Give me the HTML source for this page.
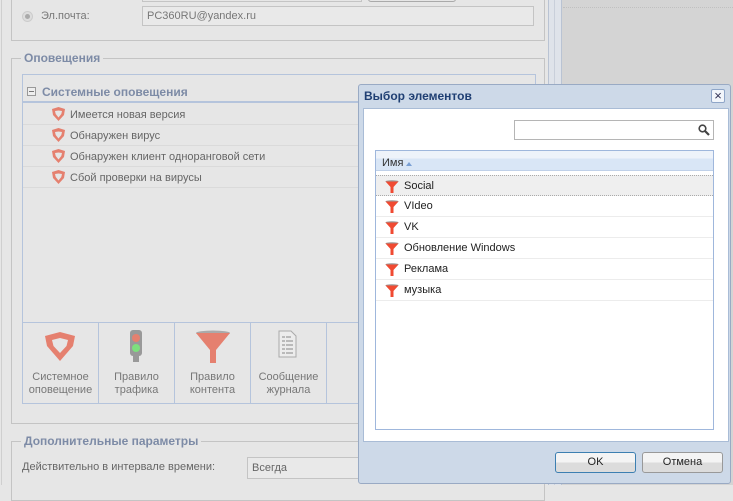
<!DOCTYPE html>
<html><head><meta charset="utf-8"><style>
*{margin:0;padding:0;box-sizing:border-box}
body{width:733px;height:485px;overflow:hidden;background:#e6e6e6;font-family:"Liberation Sans","DejaVu Sans",sans-serif;font-size:11px;color:#666;position:relative}
.a{position:absolute}
.fs{position:absolute;border:1px solid #c4c4c4}
.lg{position:absolute;background:#e6e6e6;color:#7d8ba6;font-weight:bold;font-size:12px;padding:0 3px}
.row{position:absolute;left:23px;width:512px;height:21px;border-bottom:1px solid #dadada;line-height:22px;color:#666}
.row span{position:absolute;left:47px}
.tb{position:absolute;top:322px;height:81px;width:76px;border-right:1px solid #b5c4dc;text-align:center;font-size:11px;line-height:13px;color:#777}
.tb div.t{position:absolute;top:49px;width:100%}
.dr{position:absolute;left:376px;width:337px;height:21px;border-bottom:1px solid #ececec;line-height:20px;color:#222}
.dr span{position:absolute;left:28px}
.btn{position:absolute;top:452px;width:81px;height:21px;border:1px solid #999;border-radius:3px;background:linear-gradient(#f4f4f4 50%,#dcdcdc 50%);text-align:center;line-height:19px;color:#222;font-size:11px}
</style></head><body>
<div class="a" style="left:1px;top:0;width:1px;height:485px;background:#cfcfcf"></div>
<div class="a" style="left:548px;top:0;width:14px;height:485px;background:#dfe3ea;border-left:1px solid #b9c3d3;border-right:1px solid #b9c3d3"></div>
<div class="a" style="left:554px;top:0;width:1px;height:485px;background:#c9cfda"></div>
<div class="a" style="left:562px;top:0;width:171px;height:485px;background:#d4d4d4"></div>
<div class="a" style="left:563px;top:7px;width:170px;border-top:1px dotted #c0c0c0"></div>
<div class="fs" style="left:11px;top:-5px;width:534px;height:46px"></div>
<div class="a" style="left:142px;top:-4px;width:220px;height:6px;border:1px solid #c4c4c4;border-top:none"></div>
<div class="a" style="left:368px;top:-4px;width:88px;height:6px;border:1px solid #aaa;border-top:none;border-radius:0 0 3px 3px"></div>
<div class="a" style="left:22px;top:11px;width:11px;height:11px;border-radius:50%;background:#ddd;border:1px solid #ccc"></div>
<div class="a" style="left:25px;top:14px;width:5px;height:5px;border-radius:50%;background:#aaa"></div>
<div class="a" style="left:41px;top:10px;color:#777">Эл.почта:</div>
<div class="a" style="left:142px;top:6px;width:392px;height:20px;border:1px solid #c4c4c4;background:#e9e9e9;line-height:18px;padding-left:4px;color:#777">PC360RU@yandex.ru</div>
<div class="fs" style="left:11px;top:58px;width:534px;height:366px"></div>
<div class="lg" style="left:21px;top:51px">Оповещения</div>
<div class="a" style="left:22px;top:74px;width:514px;height:330px;border:1px solid #b5c4dc"></div>
<div class="a" style="left:23px;top:82px;width:512px;height:21px;border-bottom:2px solid #b5c4dc"></div>
<div class="a" style="left:27px;top:87px;width:9px;height:9px;border:1px solid #999;background:#eee"></div>
<div class="a" style="left:29px;top:91px;width:5px;height:1px;background:#777"></div>
<div class="a" style="left:42px;top:85px;color:#7d8ba6;font-weight:bold;font-size:12px">Системные оповещения</div>
<div class="row" style="top:104px"><svg class="a" style="left:28px;top:3px" width="15" height="15" viewBox="0 0 15 15"><path d="M1 2 L7.5 0 L14 2 L13 8 L7.5 14 L2 8Z" fill="#e5806f"/><path d="M4 4 L7.5 3.5 L11 4 L10.3 7 L7.5 10.5 L4.7 7Z" fill="#e6e6e6"/></svg><span>Имеется новая версия</span></div>
<div class="row" style="top:125px"><svg class="a" style="left:28px;top:3px" width="15" height="15" viewBox="0 0 15 15"><path d="M1 2 L7.5 0 L14 2 L13 8 L7.5 14 L2 8Z" fill="#e5806f"/><path d="M4 4 L7.5 3.5 L11 4 L10.3 7 L7.5 10.5 L4.7 7Z" fill="#e6e6e6"/></svg><span>Обнаружен вирус</span></div>
<div class="row" style="top:146px"><svg class="a" style="left:28px;top:3px" width="15" height="15" viewBox="0 0 15 15"><path d="M1 2 L7.5 0 L14 2 L13 8 L7.5 14 L2 8Z" fill="#e5806f"/><path d="M4 4 L7.5 3.5 L11 4 L10.3 7 L7.5 10.5 L4.7 7Z" fill="#e6e6e6"/></svg><span>Обнаружен клиент одноранговой сети</span></div>
<div class="row" style="top:167px"><svg class="a" style="left:28px;top:3px" width="15" height="15" viewBox="0 0 15 15"><path d="M1 2 L7.5 0 L14 2 L13 8 L7.5 14 L2 8Z" fill="#e5806f"/><path d="M4 4 L7.5 3.5 L11 4 L10.3 7 L7.5 10.5 L4.7 7Z" fill="#e6e6e6"/></svg><span>Сбой проверки на вирусы</span></div>
<div class="a" style="left:23px;top:322px;width:512px;height:1px;background:#b5c4dc"></div>
<div class="tb" style="left:23px"><svg class="a" style="left:21px;top:10px" width="32" height="30" viewBox="0 0 32 30"><path d="M1 4 L16 0 L31 4 L29 14 L16 29 L3 14Z" fill="#e5806f"/><path d="M8 8 L16 6 L24 8 L22.5 14 L16 21 L9.5 14Z" fill="#e6e6e6"/></svg><div class="t">Системное<br>оповещение</div></div>
<div class="tb" style="left:99px"><div class="a" style="left:31px;top:8px;width:12px;height:26px;background:#999;border-radius:3px"></div><div class="a" style="left:34px;top:33px;width:6px;height:7px;background:#999"></div><div class="a" style="left:33px;top:12px;width:8px;height:8px;border-radius:50%;background:#e5806f"></div><div class="a" style="left:33px;top:22px;width:8px;height:8px;border-radius:50%;background:#7de07d"></div><div class="t">Правило<br>трафика</div></div>
<div class="tb" style="left:175px"><svg class="a" style="left:20px;top:8px" width="36" height="34" viewBox="0 0 36 34"><ellipse cx="18" cy="3" rx="17" ry="2.5" fill="#aaa"/><path d="M1 3 L35 3 L21 20 L21 33 L15 33 L15 20Z" fill="#e5806f"/></svg><div class="t">Правило<br>контента</div></div>
<div class="tb" style="left:251px"><svg class="a" style="left:27px;top:8px" width="20" height="28" viewBox="0 0 20 28"><path d="M1 1 L13 1 L18 6 L18 27 L1 27Z" fill="#ececec" stroke="#aaa"/><g stroke="#aaa" stroke-width="1.5"><path d="M4 7h3M8 7h5M4 11h3M8 11h7M4 15h3M8 15h7M4 19h3M8 19h7M4 23h3M8 23h7"/></g></svg><div class="t">Сообщение<br>журнала</div></div>
<div class="fs" style="left:11px;top:441px;width:534px;height:60px"></div>
<div class="lg" style="left:21px;top:434px">Дополнительные параметры</div>
<div class="a" style="left:22px;top:461px;color:#666">Действительно в интервале времени:</div>
<div class="a" style="left:247px;top:457px;width:120px;height:22px;border:1px solid #c4c4c4;background:#e9e9e9;line-height:21px;padding-left:4px;color:#666">Всегда</div>
<div class="a" style="left:358px;top:84px;width:373px;height:400px;background:#cdd9e8;border:1px solid #99aac4;border-radius:3px"></div>
<div class="a" style="left:364px;top:89px;color:#1f3f73;font-weight:bold;font-size:12px">Выбор элементов</div>
<div class="a" style="left:711px;top:89px;width:14px;height:14px;border:1px solid #8fa6c8;background:#f2f6fb;border-radius:2px;color:#335;font-size:13px;line-height:11px;text-align:center">×</div>
<div class="a" style="left:363px;top:108px;width:366px;height:334px;background:#fff;border:1px solid #a9bcd6"></div>
<div class="a" style="left:514px;top:120px;width:200px;height:20px;border:1px solid #b5b5b5;background:#fff"></div>
<svg class="a" style="left:698px;top:124px" width="12" height="12" viewBox="0 0 12 12"><circle cx="4.5" cy="4.5" r="3.3" fill="none" stroke="#444" stroke-width="1.6"/><path d="M7 7 L11 11" stroke="#444" stroke-width="2.2"/></svg>
<div class="a" style="left:375px;top:150px;width:339px;height:280px;border:1px solid #9fb7dc"></div>
<div class="a" style="left:376px;top:151px;width:337px;height:20px;background:linear-gradient(#eef3fa 40%,#d9e6f6 40%);border-bottom:1px solid #bfd0e8"></div>
<div class="a" style="left:382px;top:157px;color:#333">Имя</div>
<div class="a" style="left:406px;top:162px;width:0;height:0;border-left:3px solid transparent;border-right:3px solid transparent;border-bottom:4px solid #7aa0d4"></div>
<div class="dr" style="top:175px;background:#efefef;border-top:1px dotted #aaa;border-bottom:1px dotted #aaa"><svg class="a" style="left:9px;top:4px" width="14" height="14" viewBox="0 0 14 14"><ellipse cx="7" cy="1.5" rx="6.5" ry="1.2" fill="#999"/><path d="M0.5 1.5 L13.5 1.5 L8.5 7 L8.5 13 L5.5 13 L5.5 7Z" fill="#f04a32"/></svg><span>Social</span></div>
<div class="dr" style="top:196px"><svg class="a" style="left:9px;top:4px" width="14" height="14" viewBox="0 0 14 14"><ellipse cx="7" cy="1.5" rx="6.5" ry="1.2" fill="#999"/><path d="M0.5 1.5 L13.5 1.5 L8.5 7 L8.5 13 L5.5 13 L5.5 7Z" fill="#f04a32"/></svg><span>VIdeo</span></div>
<div class="dr" style="top:217px"><svg class="a" style="left:9px;top:4px" width="14" height="14" viewBox="0 0 14 14"><ellipse cx="7" cy="1.5" rx="6.5" ry="1.2" fill="#999"/><path d="M0.5 1.5 L13.5 1.5 L8.5 7 L8.5 13 L5.5 13 L5.5 7Z" fill="#f04a32"/></svg><span>VK</span></div>
<div class="dr" style="top:238px"><svg class="a" style="left:9px;top:4px" width="14" height="14" viewBox="0 0 14 14"><ellipse cx="7" cy="1.5" rx="6.5" ry="1.2" fill="#999"/><path d="M0.5 1.5 L13.5 1.5 L8.5 7 L8.5 13 L5.5 13 L5.5 7Z" fill="#f04a32"/></svg><span>Обновление Windows</span></div>
<div class="dr" style="top:259px"><svg class="a" style="left:9px;top:4px" width="14" height="14" viewBox="0 0 14 14"><ellipse cx="7" cy="1.5" rx="6.5" ry="1.2" fill="#999"/><path d="M0.5 1.5 L13.5 1.5 L8.5 7 L8.5 13 L5.5 13 L5.5 7Z" fill="#f04a32"/></svg><span>Реклама</span></div>
<div class="dr" style="top:280px"><svg class="a" style="left:9px;top:4px" width="14" height="14" viewBox="0 0 14 14"><ellipse cx="7" cy="1.5" rx="6.5" ry="1.2" fill="#999"/><path d="M0.5 1.5 L13.5 1.5 L8.5 7 L8.5 13 L5.5 13 L5.5 7Z" fill="#f04a32"/></svg><span>музыка</span></div>
<div class="btn" style="left:555px;border-color:#3c7fb1">OK</div>
<div class="btn" style="left:642px">Отмена</div>
</body></html>
